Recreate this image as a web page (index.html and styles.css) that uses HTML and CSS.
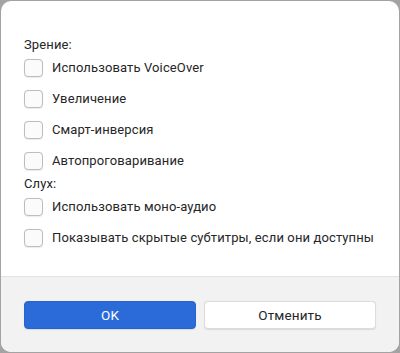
FILE: index.html
```html
<!DOCTYPE html>
<html lang="ru">
<head>
  <meta charset="UTF-8" />
  <title>Универсальный доступ</title>
  <link rel="stylesheet" href="styles.css">
</head>
<body>
  <div class="dialog">
    <div class="dialog-body">
      <div class="group-label">Зрение:</div>
      <label class="check-row"><span class="box"></span>Использовать VoiceOver</label>
      <label class="check-row"><span class="box"></span>Увеличение</label>
      <label class="check-row"><span class="box"></span>Смарт-инверсия</label>
      <label class="check-row"><span class="box"></span>Автопроговаривание</label>
      <div class="group-label">Слух:</div>
      <label class="check-row"><span class="box"></span>Использовать моно-аудио</label>
      <label class="check-row"><span class="box"></span>Показывать скрытые субтитры, если они доступны</label>
    </div>
    <div class="dialog-footer">
      <button class="btn btn-primary">OK</button>
      <button class="btn">Отменить</button>
    </div>
  </div>
</body>
</html>
```

FILE: styles.css
```css
* {
  margin: 0;
  padding: 0;
  box-sizing: border-box;
}
html, body {
  height: 100%;
}
body {
  background-color: #a3a3a3;
  padding: 1px;
  font-family: Roboto, "Noto Sans", sans-serif;
  font-size: 13px;
  letter-spacing: 0.12px;
  color: #262626;
}
.dialog {
  height: 100%;
  background-color: #ffffff;
  border-radius: 10px;
  overflow: hidden;
  display: flex;
  flex-direction: column;
}
/* Body */
.dialog-body {
  flex: 1;
  padding: 36px 16px 0 23px;
}
.group-label {
  line-height: 15px;
  height: 15px;
}
.check-row {
  display: flex;
  align-items: center;
  gap: 9px;
  height: 31px;
  white-space: nowrap;
}
.box {
  flex-shrink: 0;
  width: 19px;
  height: 18px;
  border: 1px solid #bdbdbd;
  border-radius: 4px;
  background-color: #fbfbfb;
  box-shadow: 0 0.5px 1px rgba(0,0,0,0.08);
}
/* Footer */
.dialog-footer {
  background-color: #f2f2f2;
  border-top: 1px solid #e2e2e2;
  height: 76px;
  padding: 24px 23px 0 23px;
  display: flex;
  gap: 8px;
}
.btn {
  flex: 1;
  height: 28px;
  border-radius: 4px;
  border: 1px solid #dcdcdc;
  background-color: #ffffff;
  font-family: Roboto, "Noto Sans", sans-serif;
  font-size: 13.5px;
  letter-spacing: 0.12px;
  color: #262626;
  box-shadow: 0 0.5px 1px rgba(0,0,0,0.1);
}
.btn-primary {
  background-color: #2a6bd9;
  border-color: #2764cf;
  color: #ffffff;
}
```
